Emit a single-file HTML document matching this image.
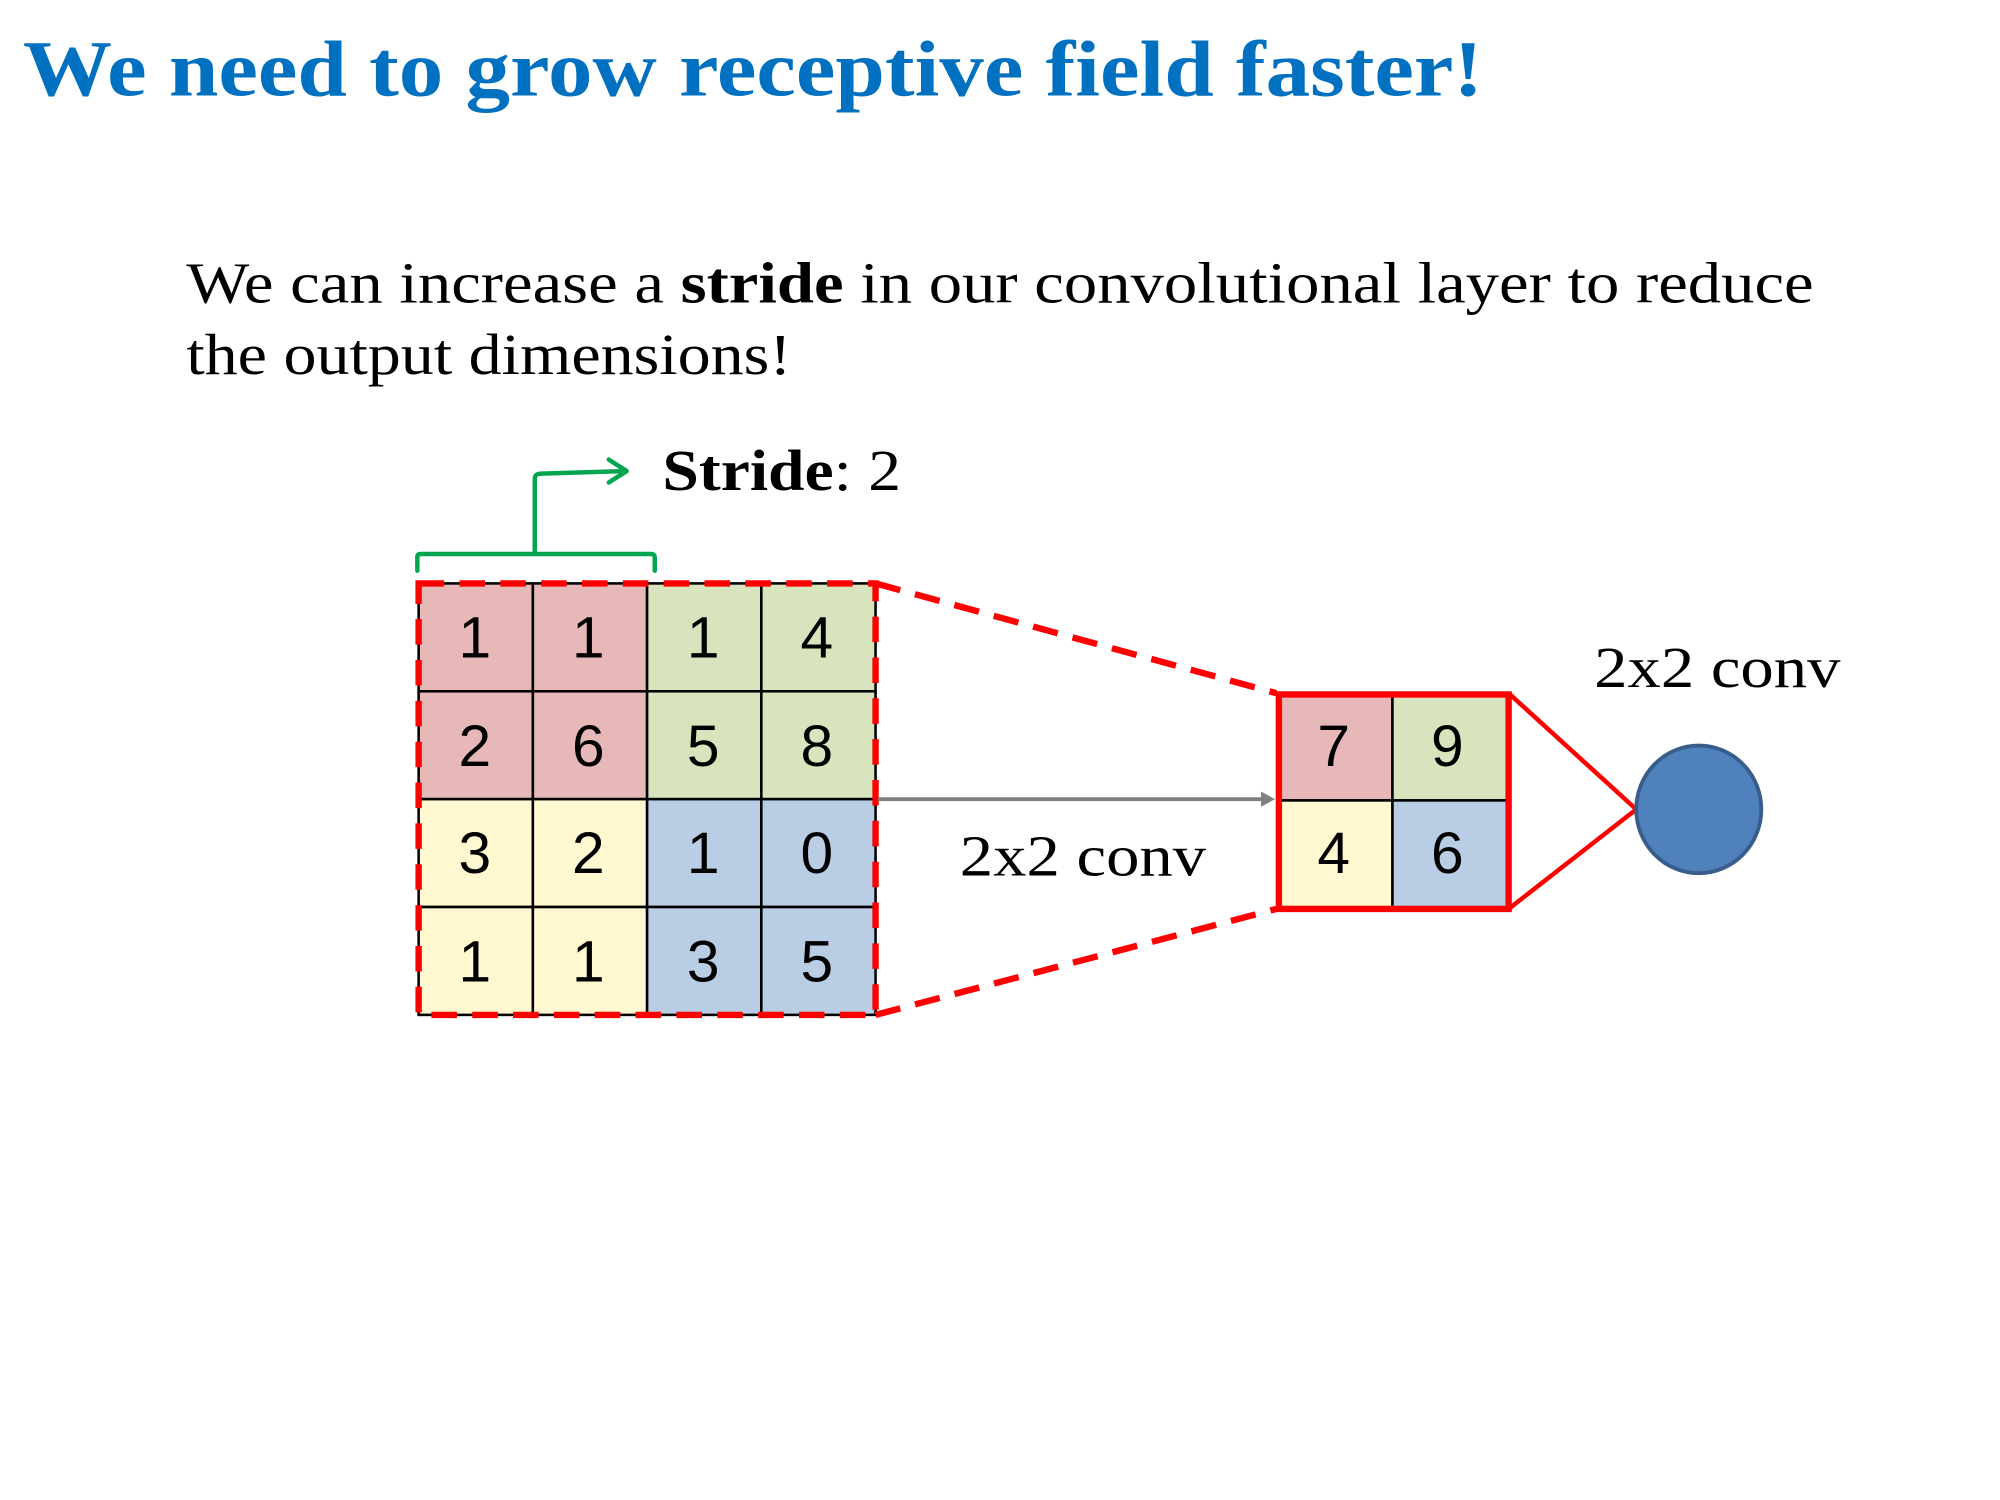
<!DOCTYPE html>
<html><head><style>html,body{margin:0;padding:0;background:#fff}svg{display:block}</style></head>
<body>
<svg width="2000" height="1500" viewBox="0 0 1567 1175" preserveAspectRatio="none" xmlns="http://www.w3.org/2000/svg">
<text x="18" y="75" font-family="Liberation Serif, serif" font-weight="bold" font-size="62" fill="#0070C0" textLength="1144" lengthAdjust="spacingAndGlyphs">We need to grow receptive field faster!</text>
<g font-family="Liberation Serif, serif" font-size="46" fill="#000">
<text x="146" y="237" textLength="1275" lengthAdjust="spacingAndGlyphs">We can increase a <tspan font-weight="bold">stride</tspan> in our convolutional layer to reduce</text>
<text x="146" y="293" textLength="474" lengthAdjust="spacingAndGlyphs">the output dimensions!</text>
<text x="519" y="384" textLength="187" lengthAdjust="spacingAndGlyphs"><tspan font-weight="bold">Stride</tspan>: 2</text>
<text x="752" y="686" textLength="193" lengthAdjust="spacingAndGlyphs">2x2 conv</text>
<text x="1249" y="538" textLength="193" lengthAdjust="spacingAndGlyphs">2x2 conv</text>
</g>
<g fill="none" stroke="#00A550" stroke-width="3.5" stroke-linecap="round" stroke-linejoin="round">
<path d="M327 447 V436 Q327 434 330 434 H510 Q513 434 513 437 V447"/>
<path d="M419 434 V375 Q419 371 424 371 L490 369"/>
<path d="M477 360 L491 369 L477 378"/>
</g>
<g stroke="#000" stroke-width="2">
<rect x="328" y="457" width="89.5" height="84.5" fill="#E6B9B8"/>
<rect x="417.5" y="457" width="89.5" height="84.5" fill="#E6B9B8"/>
<rect x="328" y="541.5" width="89.5" height="84.5" fill="#E6B9B8"/>
<rect x="417.5" y="541.5" width="89.5" height="84.5" fill="#E6B9B8"/>
<rect x="507" y="457" width="89.5" height="84.5" fill="#D7E4BD"/>
<rect x="596.5" y="457" width="89.5" height="84.5" fill="#D7E4BD"/>
<rect x="507" y="541.5" width="89.5" height="84.5" fill="#D7E4BD"/>
<rect x="596.5" y="541.5" width="89.5" height="84.5" fill="#D7E4BD"/>
<rect x="328" y="626" width="89.5" height="84.5" fill="#FFF8D0"/>
<rect x="417.5" y="626" width="89.5" height="84.5" fill="#FFF8D0"/>
<rect x="328" y="710.5" width="89.5" height="84.5" fill="#FFF8D0"/>
<rect x="417.5" y="710.5" width="89.5" height="84.5" fill="#FFF8D0"/>
<rect x="507" y="626" width="89.5" height="84.5" fill="#B9CDE5"/>
<rect x="596.5" y="626" width="89.5" height="84.5" fill="#B9CDE5"/>
<rect x="507" y="710.5" width="89.5" height="84.5" fill="#B9CDE5"/>
<rect x="596.5" y="710.5" width="89.5" height="84.5" fill="#B9CDE5"/>
</g>
<g font-family="Liberation Sans, sans-serif" font-size="46" text-anchor="middle" fill="#000">
<text x="372" y="515">1</text><text x="461" y="515">1</text><text x="551" y="515">1</text><text x="640" y="515">4</text>
<text x="372" y="600">2</text><text x="461" y="600">6</text><text x="551" y="600">5</text><text x="640" y="600">8</text>
<text x="372" y="684">3</text><text x="461" y="684">2</text><text x="551" y="684">1</text><text x="640" y="684">0</text>
<text x="372" y="769">1</text><text x="461" y="769">1</text><text x="551" y="769">3</text><text x="640" y="769">5</text>
</g>
<g fill="none" stroke="#FF0000" stroke-width="5" stroke-dasharray="20,12">
<rect x="328" y="457" width="358" height="338"/>
<path d="M686 457 L1000 543"/>
<path d="M686 795 L1000 712"/>
</g>
<path d="M688 626 H990" stroke="#808080" stroke-width="3"/>
<path d="M988 620 L999 626 L988 632 Z" fill="#808080"/>
<g stroke="#000" stroke-width="2">
<rect x="1002" y="544" width="89" height="83" fill="#E6B9B8"/>
<rect x="1091" y="544" width="90" height="83" fill="#D7E4BD"/>
<rect x="1002" y="627" width="89" height="84" fill="#FFF8D0"/>
<rect x="1091" y="627" width="90" height="84" fill="#B9CDE5"/>
</g>
<g font-family="Liberation Sans, sans-serif" font-size="46" text-anchor="middle" fill="#000">
<text x="1045" y="600">7</text><text x="1134" y="600">9</text>
<text x="1045" y="684">4</text><text x="1134" y="684">6</text>
</g>
<rect x="1002" y="544" width="180" height="168" fill="none" stroke="#FF0000" stroke-width="5"/>
<path d="M1182 543 L1282 634 L1182 712" fill="none" stroke="#FF0000" stroke-width="3.5"/>
<ellipse cx="1331" cy="634" rx="49" ry="50" fill="#4F81BD" stroke="#385D8A" stroke-width="3"/>
</svg>
</body></html>
